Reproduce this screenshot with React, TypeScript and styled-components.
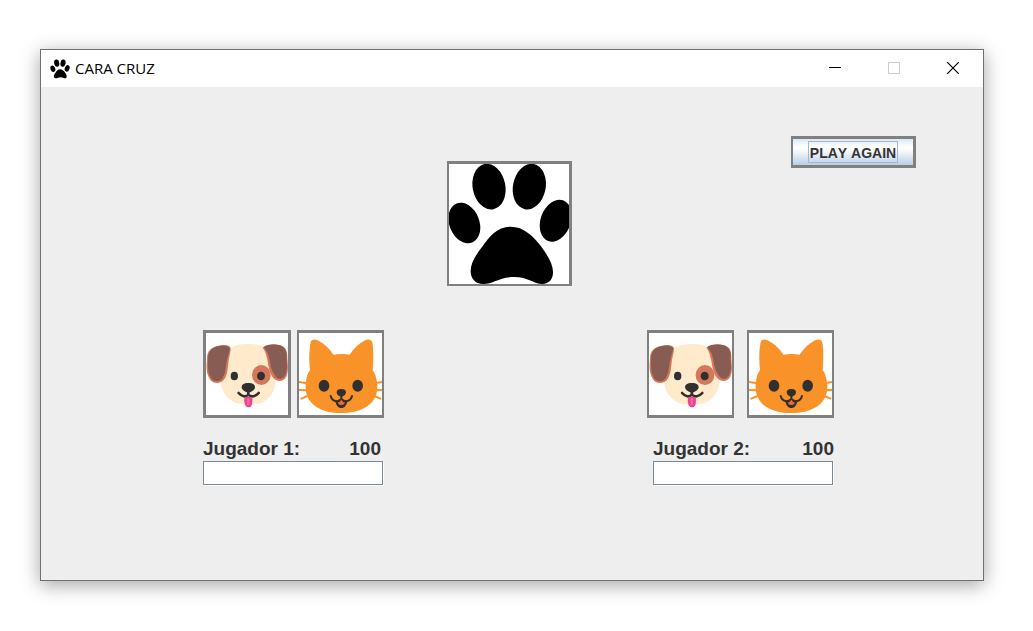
import React from "react";
import styled, { createGlobalStyle } from "styled-components";

const GlobalStyle = createGlobalStyle`
  *, *::before, *::after { box-sizing: border-box; }
  body {
    margin: 0;
    background: #fff;
    color: #333;
    font-family: "Liberation Sans", Arial, sans-serif;
    font-kerning: none;
  }
`;

const Desktop = styled.div`
  padding: 49px 49px 50px 40px;
`;

const Window = styled.main`
  border: 1px solid #707070;
  background: #eee;
  box-shadow: 0 4px 18px rgba(0, 0, 0, 0.36);
`;

const TitleBar = styled.header`
  display: flex;
  align-items: center;
  height: 37px;
  padding-left: 9px;
  background: #fff;
`;

const TitleIcon = styled.svg`
  display: block;
  width: 20px;
  height: 20px;
`;

const Title = styled.h1`
  flex: 1;
  margin: 0;
  padding: 0 0 2px 5px;
  color: #000;
  font: 400 15px/20px "Open Sans", "Noto Sans", sans-serif;
`;

const WindowControls = styled.div`
  display: flex;
  gap: 1px;
  padding-right: 1px;
`;

const WindowButton = styled.button`
  display: grid;
  place-items: center;
  width: 58px;
  height: 36px;
  margin: 0;
  padding: 0 0 1px;
  border: 0;
  background: transparent;
  color: #000;
  &:disabled { color: #ccc; }
`;

const Glyph = styled.svg`
  display: block;
  width: 12px;
  height: 12px;
  fill: none;
  stroke: currentColor;
`;

const Stage = styled.div`
  padding: 49px 0 95px;
`;

const Board = styled.section`
  display: grid;
  grid-template-columns: 1fr auto 1fr;
  padding: 0 67px 0 62px;
`;

const Coin = styled.div`
  grid-column: 2;
  width: 125px;
  height: 125px;
  margin-top: 25px;
  border: solid #808080;
  border-width: 3px 3px 2px 2px;
  background: #fff;
`;

const Picture = styled.svg`
  display: block;
  width: 100%;
  height: 100%;
`;

const PlayAgain = styled.button`
  display: grid;
  place-items: center;
  justify-self: end;
  align-self: start;
  width: 125px;
  height: 32px;
  padding: 0 0 1px;
  border: solid #808080;
  border-width: 3px 3px 3px 2px;
  background: linear-gradient(#dde8f3 0%, #fff 30%, #fff 38%, #b8cfe5 100%);
  color: #333;
  font: 700 14px/16px "Liberation Sans", Arial, sans-serif;
  font-kerning: none;
  white-space: nowrap;
`;

const FocusFrame = styled.span`
  padding: 3px 1px 1px;
  border: 1px solid #a3b8cc;
`;

const Players = styled.div`
  display: flex;
  justify-content: space-between;
  padding: 44px 149px 0 162px;
`;

const Choices = styled.div<{ $gap: number }>`
  display: flex;
  gap: ${(p) => p.$gap}px;
`;

const Choice = styled.button<{ $edge: number }>`
  width: ${(p) => (p.$edge === 3 ? 88 : 87)}px;
  height: 88px;
  padding: 0;
  border: solid #808080;
  border-width: 3px ${(p) => p.$edge}px;
  background: #fff;
`;

const Bet = styled.div<{ $indent: number }>`
  display: grid;
  grid-template-columns: 1fr auto;
  row-gap: 1px;
  padding: 20px 0 0 ${(p) => p.$indent}px;
  font-size: 19px;
  line-height: 22px;
  font-weight: 700;
`;

const Score = styled.output<{ $inset: number }>`
  padding-right: ${(p) => p.$inset}px;
`;

const BetInput = styled.input`
  grid-column: 1 / -1;
  width: 180px;
  height: 24px;
  padding: 0 4px;
  border: 1px solid #7a8a99;
  border-radius: 0;
  background: #fff;
  box-shadow: 1px 1px 0 #fff;
  color: #333;
  font: 400 14px/18px "Liberation Sans", Arial, sans-serif;
`;

function PawShape() {
  return (
    <>
      <ellipse cx="147" cy="95" rx="49" ry="69" transform="rotate(-11 147 95)" />
      <ellipse cx="268" cy="95" rx="49" ry="69" transform="rotate(11 268 95)" />
      <ellipse cx="73" cy="204" rx="45" ry="63" transform="rotate(-22 73 204)" />
      <ellipse cx="347" cy="197" rx="45" ry="65" transform="rotate(20 347 197)" />
      <path d="M212 215C251 215 279 243 302 272C322 300 339 326 339 352C339 373 327 387 307 387C282 387 264 366 222 366C179 366 159 387 130 387C106 387 92 371 92 348C92 323 107 301 126 276C148 244 173 215 212 215Z" />
    </>
  );
}

function Dog() {
  return (
    <Picture viewBox="33 33 246 246" preserveAspectRatio="none" aria-hidden="true">
      <path fill="#ffeacb" d="M157 66C196 66 214 72 222 100C228 124 237 150 241 176C243 201 228 225 208 238C193 248 177 247 160 247C143 247 128 248 113 238C91 224 77 202 78 176C80 149 93 131 96 104C99 74 125 66 157 66Z" />
      <path fill="#d4775a" d="M107 79C105 70 88 67 72 71C48 75 37 86 36 108C35 131 31 146 44 171C53 187 76 186 86 174C98 160 97 144 100 124C102 105 106 95 107 79Z" />
      <path fill="#875c52" d="M105 80C102 71 86 68 71 72C49 77 40 88 39 110C39 132 37 147 48 168C55 180 72 181 81 170C92 155 91 139 95 119C97 103 103 93 105 80Z" />
      <ellipse cx="199" cy="159" rx="28" ry="30" fill="#d4775a" />
      <path fill="#d4775a" d="M203 77C213 67 238 65 254 69C273 74 277 87 277 106C278 130 282 145 273 166C265 180 246 181 235 168C222 153 221 132 216 109C213 94 210 87 203 77Z" />
      <path fill="#875c52" d="M206 76C216 67 238 66 253 70C271 75 275 87 275 106C275 130 279 143 270 161C263 173 249 174 241 162C228 146 226 127 222 106C218 90 213 85 206 76Z" />
      <ellipse cx="118" cy="162" rx="11" ry="13" fill="#303030" />
      <ellipse cx="198" cy="162" rx="12" ry="13" fill="#303030" />
      <path fill="#303030" d="M160 183C174 183 181 189 180 197C179 204 171 207 165 211H155C149 207 141 204 140 197C139 189 146 183 160 183Z" />
      <path d="M131 213C140 224 152 226 160 218C168 226 182 224 191 213M160 207V219" fill="none" stroke="#303030" strokeWidth="8" strokeLinecap="round" />
      <path fill="#ef438f" d="M148 227Q160 221 172 227V240C172 249 168 256 161 256C153 256 149 249 148 240Z" />
      <path d="M160 231V245" stroke="#f36aa8" strokeWidth="7" strokeLinecap="round" />
    </Picture>
  );
}

function Cat() {
  return (
    <Picture viewBox="312 33 249 246" preserveAspectRatio="none" aria-hidden="true">
      <path d="M312 180L336 184M312 204L336 205M319 230L338 222M561 180L540 184M561 204L540 205M556 230L538 222" fill="none" stroke="#f99329" strokeWidth="6" strokeLinecap="round" />
      <path fill="#f99329" d="M345 145C341 112 343 80 347 61C349 51 359 50 370 56C388 65 403 79 415 98C430 95 450 95 464 98C476 79 492 65 510 55C521 50 530 52 532 62C536 83 535 115 533 145C540 154 543 164 546 180C551 213 539 239 515 254C493 268 466 273 438 273C410 273 385 268 363 254C339 238 328 213 333 180C334 164 338 154 345 145Z" />
      <ellipse cx="387" cy="191" rx="16" ry="18" fill="#303030" />
      <ellipse cx="488" cy="191" rx="16" ry="18" fill="#303030" />
      <path fill="#303030" d="M439 201C449 201 454 206 453 212C452 219 445 223 439 224C433 223 426 219 425 212C424 206 429 201 439 201Z" />
      <path fill="#303030" d="M421 237L439 232L457 237C455 250 449 258 439 258C429 258 423 250 421 237Z" />
      <path d="M407 222C411 239 430 242 439 231C448 242 467 239 471 222M439 222V233" fill="none" stroke="#303030" strokeWidth="6" strokeLinecap="round" />
      <path fill="#f2683c" d="M428 242Q434 242 439 233Q444 242 450 242Q444 251 439 248Q434 251 428 242Z" />
    </Picture>
  );
}

type PlayerProps = {
  number: number;
  score: number;
  gap: number;
  edge: number;
  indent: number;
  inset: number;
};

function Player({ number, score, gap, edge, indent, inset }: PlayerProps) {
  const id = `bet-${number}`;
  return (
    <section>
      <Choices $gap={gap}>
        <Choice type="button" aria-label="Perro" $edge={edge}>
          <Dog />
        </Choice>
        <Choice type="button" aria-label="Gato" $edge={2}>
          <Cat />
        </Choice>
      </Choices>
      <Bet $indent={indent}>
        <label htmlFor={id}>Jugador {number}:</label>
        <Score $inset={inset}>{score}</Score>
        <BetInput id={id} type="text" />
      </Bet>
    </section>
  );
}

export default function App() {
  return (
    <Desktop>
      <GlobalStyle />
      <Window>
        <TitleBar>
          <TitleIcon viewBox="18 16 384 384" aria-hidden="true">
            <PawShape />
          </TitleIcon>
          <Title>CARA CRUZ</Title>
          <WindowControls>
            <WindowButton type="button" aria-label="Minimizar">
              <Glyph viewBox="0 0 12 12"><path d="M0 5.5H12" /></Glyph>
            </WindowButton>
            <WindowButton type="button" aria-label="Maximizar" disabled>
              <Glyph viewBox="0 0 12 12"><path d="M.5.5H11.5V11.5H.5Z" /></Glyph>
            </WindowButton>
            <WindowButton type="button" aria-label="Cerrar">
              <Glyph viewBox="0 0 12 12"><path d="M.2.2L11.8 11.8M11.8.2L.2 11.8" strokeWidth="1.2" /></Glyph>
            </WindowButton>
          </WindowControls>
        </TitleBar>
        <Stage>
          <Board>
            <Coin>
              <Picture viewBox="27 27 360 360" preserveAspectRatio="none" role="img" aria-label="Huella">
                <PawShape />
              </Picture>
            </Coin>
            <PlayAgain type="button">
              <FocusFrame>PLAY AGAIN</FocusFrame>
            </PlayAgain>
          </Board>
          <Players>
            <Player number={1} score={100} gap={6} edge={3} indent={0} inset={3} />
            <Player number={2} score={100} gap={13} edge={2} indent={6} inset={0} />
          </Players>
        </Stage>
      </Window>
    </Desktop>
  );
}
